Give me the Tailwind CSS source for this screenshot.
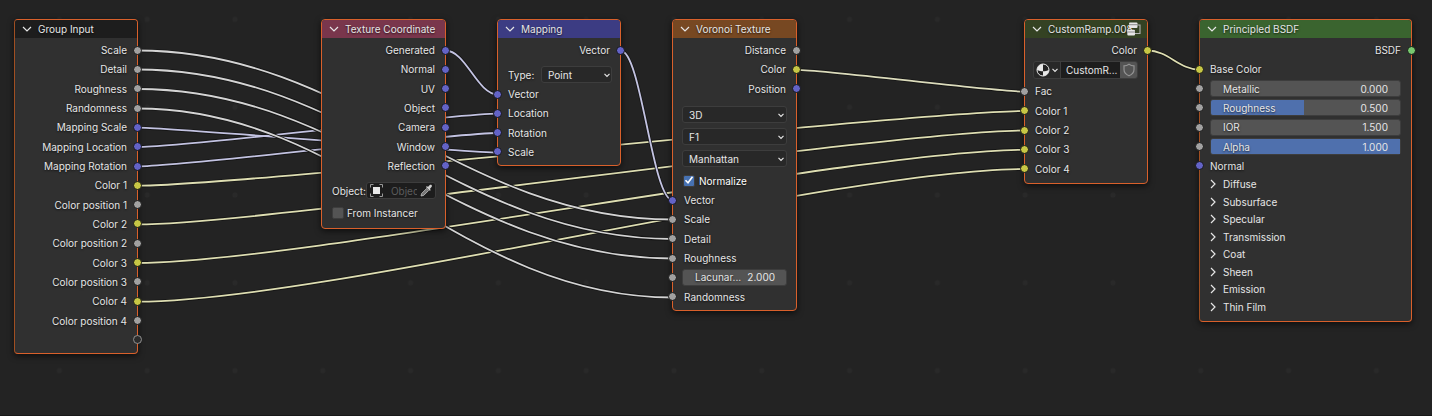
<!DOCTYPE html>
<html lang="en">
<head>
<meta charset="utf-8">
<title>Shader node editor</title>
<script src="https://cdn.jsdelivr.net/npm/@tailwindcss/browser@4"></script>
</head>
<body class="bg-[#232323]">
<svg width="0" height="0" class="absolute" aria-hidden="true">
  <symbol id="down" viewBox="0 0 10 10"><path d="M1 3l4 4 4-4" fill="none" stroke="currentColor" stroke-width="1.2"/></symbol>
  <symbol id="right" viewBox="0 0 10 10"><path d="M3 1l4 4-4 4" fill="none" stroke="currentColor" stroke-width="1.2"/></symbol>
  <symbol id="caret" viewBox="0 0 8 8"><path d="M1.500 2.800L4 5.300l2.500-2.500" fill="none" stroke="currentColor" stroke-width="1.2"/></symbol>
</svg>
<main class="relative min-h-screen w-full overflow-hidden border-b border-[#181818] font-['Inter',sans-serif] text-[10px] leading-3 text-[#e6e6e6] [text-shadow:0_1px_2px_#000000b0]
  [&_i]:absolute [&_i]:size-[9px] [&_i]:rounded-full [&_i]:border [&_i]:border-[#161616]
  [&_section]:absolute [&_section]:top-[19px] [&_section]:flex [&_section]:flex-col [&_section]:rounded-[4px] [&_section]:border [&_section]:border-[#d9602b] [&_section]:bg-[#303030] [&_section]:shadow-[0_2px_6px_#000000a0]
  [&_header]:flex [&_header]:h-[18px] [&_header]:items-center [&_header]:gap-[6px] [&_header]:rounded-t-[3px] [&_header]:pb-px [&_header]:pl-[7px] [&_header]:mb-[3px] [&_header]:whitespace-nowrap
  [&_header_svg]:size-[10px]
  [&_ul]:flex [&_ul]:flex-col [&_li]:relative [&_li]:flex [&_li]:flex-1 [&_li]:items-center [&_li]:px-[10px] [&_li]:pb-px">

  <svg class="absolute inset-0 size-full" fill="none" aria-hidden="true">
    <defs>
      <pattern id="dots" x="15.500" y="-24.500" width="87.800" height="87.800" patternUnits="userSpaceOnUse"><circle cx="43.900" cy="43.900" r="2.500" fill="#292929"/></pattern>
      <g id="white">
        <path d="M137.500 50.500C351.500 50.500 459 219.500 673 219.500"/>
        <path d="M137.500 69.500C351.500 69.500 459 239 673 239"/>
        <path d="M137.500 89C351.500 89 459 258.500 673 258.500"/>
        <path d="M137.500 108.500C351.500 108.500 459 297.500 673 297.500"/>
      </g>
      <g id="lilac">
        <path d="M137.500 127.700C172.500 127.700 463 152.700 498 152.700"/>
        <path d="M137.500 147C184 147 451.500 113.700 498 113.700"/>
        <path d="M137.500 166.400C184 166.400 451.500 133 498 133"/>
        <path d="M445.500 50.500C466 50.500 477 94.500 498 94.500"/>
        <path d="M620.500 50.500C641.500 50.500 652 200.500 673 200.500"/>
      </g>
      <g id="yellow">
        <path d="M137.500 185.700C242.500 185.700 919.500 111 1024.500 111"/>
        <path d="M137.500 224.400C268.500 224.400 893.500 130.500 1024.500 130.500"/>
        <path d="M137.500 263C296.500 263 865.500 149.800 1024.500 149.800"/>
        <path d="M137.500 301.700C322.500 301.700 839.500 169 1024.500 169"/>
        <path d="M1147.500 50.500C1168.500 50.500 1179 69.800 1200 69.800"/>
      </g>
    </defs>
    <rect width="100%" height="100%" fill="url(#dots)"/>
    <use href="#yellow" stroke="#151515" stroke-width="3.500"/><use href="#yellow" stroke="#dedeb2" stroke-width="1.800"/>
    <path d="M796.500 69.800C827 69.800 993.500 91.700 1024.500 91.700" stroke="#151515" stroke-width="3.500"/>
    <path d="M796.500 69.800C827 69.800 993.500 91.700 1024.500 91.700" stroke="#dcdcbc" stroke-width="1.800"/>
    <use href="#lilac" stroke="#151515" stroke-width="3.500"/><use href="#lilac" stroke="#c3c3e2" stroke-width="1.800"/>
    <use href="#white" stroke="#151515" stroke-width="3.500"/><use href="#white" stroke="#d4d4d4" stroke-width="1.800"/>
  </svg>

  <section class="left-[14px] w-[124px] border-l-[#a04f22]!" aria-label="Group Input">
    <header class="bg-[#1d1d1d]"><button aria-label="Collapse"><svg><use href="#down"/></svg></button>Group Input</header>
    <ul class="mb-[3px] h-[309px] text-right [&_i]:-right-[5px] [&_li]:justify-end">
      <li>Scale<i class="bg-[#a1a1a1]"></i></li>
      <li>Detail<i class="bg-[#a1a1a1]"></i></li>
      <li>Roughness<i class="bg-[#a1a1a1]"></i></li>
      <li>Randomness<i class="bg-[#a1a1a1]"></i></li>
      <li>Mapping Scale<i class="bg-[#6363c7]"></i></li>
      <li>Mapping Location<i class="bg-[#6363c7]"></i></li>
      <li>Mapping Rotation<i class="bg-[#6363c7]"></i></li>
      <li>Color 1<i class="bg-[#c7c745]"></i></li>
      <li>Color position 1<i class="bg-[#a1a1a1]"></i></li>
      <li>Color 2<i class="bg-[#c7c745]"></i></li>
      <li>Color position 2<i class="bg-[#a1a1a1]"></i></li>
      <li>Color 3<i class="bg-[#c7c745]"></i></li>
      <li>Color position 3<i class="bg-[#a1a1a1]"></i></li>
      <li>Color 4<i class="bg-[#c7c745]"></i></li>
      <li>Color position 4<i class="bg-[#a1a1a1]"></i></li>
      <li><i class="border-[#909090]! bg-[#2c2c2c]"></i></li>
    </ul>
  </section>

  <section class="left-[321px] w-[125px]" aria-label="Texture Coordinate">
    <header class="bg-[#79364c]"><button aria-label="Collapse"><svg><use href="#down"/></svg></button>Texture Coordinate</header>
    <ul class="h-[135px] [&_i]:-right-[5px] [&_i]:bg-[#6363c7] [&_li]:justify-end">
      <li>Generated<i></i></li>
      <li>Normal<i></i></li>
      <li>UV<i></i></li>
      <li>Object<i></i></li>
      <li>Camera<i></i></li>
      <li>Window<i></i></li>
      <li>Reflection<i></i></li>
    </ul>
    <div class="mt-[6px] flex items-center pr-[9px] pl-[10px]">
      <label for="obj">Object:</label>
      <div class="flex h-[17px] min-w-0 flex-1 items-center rounded-[3px] border border-[#3d3d3d] bg-[#1d1d1d] pr-[2px] pl-[3px]">
        <svg class="size-[13px] shrink-0" viewBox="0 0 13 13" fill="none"><rect x="3" y="3" width="7" height="7" fill="#e8e8e8"/><path d="M.5 3.500v-3h3M9.500.5h3v3M12.500 9.500v3h-3M3.500 12.500h-3v-3" stroke="#9a9a9a"/></svg>
        <input id="obj" placeholder="Object" class="ml-2 w-[26px] min-w-0 bg-transparent placeholder:text-[#5c5c5c]">
        <button aria-label="Pick object" class="ml-auto"><svg class="size-[13px]" viewBox="0 0 13 13"><path d="M1 12l.7-2.600 5-5 2 2-5 5z" fill="#777" stroke="#c0c0c0" stroke-width=".8"/><path d="M6 3l1-.9.9.8 1.600-1.700c1.600-1.300 3.200.4 2 1.900L9.900 4.900l.9 1-.9.9z" fill="#d0d0d0"/></svg></button>
      </div>
    </div>
    <label class="mt-[5px] mb-[7px] ml-[10px] flex h-[17px] items-center gap-[3px]"><input type="checkbox" class="size-[12px] appearance-none rounded-[2px] border border-[#3d3d3d] bg-[#545454]">From Instancer</label>
  </section>

  <section class="left-[497px] w-[124px]" aria-label="Mapping">
    <header class="bg-[#3c3c83]"><button aria-label="Collapse"><svg><use href="#down"/></svg></button>Mapping</header>
    <ul class="h-[19px]"><li class="justify-end">Vector<i class="-right-[5px] bg-[#6363c7]"></i></li></ul>
    <div class="mt-[6px] mb-[2px] flex items-center justify-between pr-[8px] pl-[10px]">
      <label for="type">Type:</label>
      <div class="relative w-[71px]">
        <select id="type" class="block h-[17px] w-full appearance-none rounded-[3px] border border-[#3d3d3d] bg-[#282828] pl-[6px] leading-3"><option>Point</option><option>Texture</option><option>Vector</option><option>Normal</option></select>
        <svg class="pointer-events-none absolute top-[5px] right-[1px] size-[8px]"><use href="#caret"/></svg>
      </div>
    </div>
    <ul class="mb-[3px] h-[77px] [&_i]:-left-[5px] [&_i]:bg-[#6363c7]">
      <li>Vector<i></i></li>
      <li>Location<i></i></li>
      <li>Rotation<i></i></li>
      <li>Scale<i></i></li>
    </ul>
  </section>

  <section class="left-[672px] w-[125px]" aria-label="Voronoi Texture">
    <header class="bg-[#774822]"><button aria-label="Collapse"><svg><use href="#down"/></svg></button>Voronoi Texture</header>
    <ul class="h-[58px] [&_i]:-right-[5px] [&_li]:justify-end">
      <li>Distance<i class="bg-[#a1a1a1]"></i></li>
      <li>Color<i class="bg-[#c7c745]"></i></li>
      <li>Position<i class="bg-[#6363c7]"></i></li>
    </ul>
    <div class="mt-[7px] flex flex-col gap-[5px] px-[9px] [&_div]:relative [&_select]:block [&_select]:h-[17px] [&_select]:w-full [&_select]:appearance-none [&_select]:rounded-[3px] [&_select]:border [&_select]:border-[#3d3d3d] [&_select]:bg-[#282828] [&_select]:pl-[6px] [&_svg]:pointer-events-none [&_svg]:absolute [&_svg]:top-[5px] [&_svg]:right-[2px] [&_svg]:size-[8px]">
      <div><select aria-label="Dimensions"><option>3D</option><option>2D</option></select><svg><use href="#caret"/></svg></div>
      <div><select aria-label="Feature"><option>F1</option><option>F2</option></select><svg><use href="#caret"/></svg></div>
      <div><select aria-label="Distance metric"><option>Manhattan</option><option>Euclidean</option></select><svg><use href="#caret"/></svg></div>
    </div>
    <label class="relative mt-[5px] mb-[2px] ml-[10px] flex h-[17px] items-center gap-[4px] text-white"><input type="checkbox" checked class="size-[12px] appearance-none rounded-[2px] border border-[#3d3d3d] bg-[#4772b3]"><svg class="pointer-events-none absolute top-[3px] left-[1px] size-[10px]" viewBox="0 0 10 10"><path d="M1.500 5.200l2.500 2.500 4.500-6" fill="none" stroke="#fff" stroke-width="1.600"/></svg>Normalize</label>
    <ul class="mb-[3px] h-[116px] [&_i]:-left-[5px] [&_i]:bg-[#a1a1a1] [&_li]:pl-[11px]">
      <li>Vector<i class="bg-[#6363c7]!"></i></li>
      <li>Scale<i></i></li>
      <li>Detail<i></i></li>
      <li>Roughness<i></i></li>
      <li class="px-[9px]!"><i></i><div class="flex h-[17px] flex-1 items-center rounded-[3px] border border-[#3d3d3d] bg-[#545454] pr-[11px] pl-[12px]"><label for="lac">Lacunar...</label><input id="lac" value="2.000" class="w-0 min-w-0 flex-1 text-right"></div></li>
      <li>Randomness<i></i></li>
    </ul>
  </section>

  <section class="left-[1024px] w-[124px]" aria-label="CustomRamp.008">
    <header class="relative bg-[#344223]"><button aria-label="Collapse"><svg><use href="#down"/></svg></button>CustomRamp.008
      <svg class="absolute top-[2px] right-[6px] size-[14px]!" viewBox="0 0 14 14"><path d="M10.500 3h2.500v8.500H8" fill="none" stroke="#b5b5b5" stroke-width="1.100"/><rect x="2" y=".5" width="8.500" height="5.500" rx="1" fill="#e6e6e6"/><rect x=".3" y="7.800" width="7.700" height="5.700" rx="1" fill="#e6e6e6"/><path d="M2 2.700h8.500M.3 10h7.700" stroke="#666" stroke-width=".7"/></svg>
    </header>
    <ul class="h-[19px]"><li class="justify-end">Color<i class="-right-[5px] bg-[#c7c745]"></i></li></ul>
    <div class="mt-[1px] mb-[3px] ml-[8px] mr-[9px] flex h-[18px] overflow-hidden rounded-[3px] border border-[#3d3d3d] bg-[#3d3d3d]">
      <button aria-label="Browse node groups" class="flex w-[26px] items-center gap-px bg-[#282828] pl-[2px]">
        <svg class="size-[14px]" viewBox="0 0 14 14"><circle cx="7" cy="7" r="6" fill="#222" stroke="#e8e8e8"/><path d="M7 7V1a6 6 0 0 0-6 6c2 .9 4 1.200 6 1.200zM7 8.200c2 0 4-.3 6-1.200a6 6 0 0 1-6 6z" fill="#e8e8e8"/></svg>
        <svg class="size-[8px]"><use href="#caret"/></svg>
      </button>
      <input aria-label="Node group name" value="CustomR..." class="ml-px w-0 min-w-0 flex-1 bg-[#1d1d1d] pl-[5px]">
      <button aria-label="Fake user" class="flex w-[17px] items-center justify-center bg-[#545454]"><svg class="size-[14px]" viewBox="0 0 14 14"><path d="M7 1.200c1.500 1.200 3.200 1.700 5 1.700v3.600c0 3-2 5-5 6.300-3-1.300-5-3.300-5-6.300V2.900c1.800 0 3.500-.5 5-1.700z" fill="none" stroke="#929292" stroke-width="1.200"/></svg></button>
    </div>
    <ul class="mb-[4px] h-[97px] [&_i]:-left-[5px] [&_i]:bg-[#c7c745]">
      <li>Fac<i class="bg-[#a1a1a1]!"></i></li>
      <li>Color 1<i></i></li>
      <li>Color 2<i></i></li>
      <li>Color 3<i></i></li>
      <li>Color 4<i></i></li>
    </ul>
  </section>

  <section class="left-[1199px] w-[213px] border-l-[#a04f22]!" aria-label="Principled BSDF">
    <header class="bg-[#3a642f]"><button aria-label="Collapse"><svg><use href="#down"/></svg></button>Principled BSDF</header>
    <ul class="h-[135px] [&_div]:relative [&_div]:flex [&_div]:h-[17px] [&_div]:flex-1 [&_div]:items-center [&_div]:rounded-[3px] [&_div]:border [&_div]:border-[#3d3d3d] [&_div]:bg-[#545454] [&_div]:px-[12px] [&_i]:-left-[5px] [&_i]:bg-[#a1a1a1] [&_input]:relative [&_input]:w-0 [&_input]:min-w-0 [&_input]:flex-1 [&_input]:text-right [&_label]:relative [&_span]:absolute [&_span]:inset-y-0 [&_span]:left-0 [&_span]:rounded-l-[2px] [&_span]:bg-[#4f70ad]">
      <li class="justify-end">BSDF<i class="-right-[5px] left-auto! bg-[#77c86f]!"></i></li>
      <li>Base Color<i class="bg-[#c7c745]!"></i></li>
      <li><i></i><div><label for="met">Metallic</label><input id="met" value="0.000"></div></li>
      <li><i></i><div><span style="width:49%"></span><label for="rou">Roughness</label><input id="rou" value="0.500"></div></li>
      <li><i></i><div><label for="ior">IOR</label><input id="ior" value="1.500"></div></li>
      <li><i></i><div><span style="width:100%"></span><label for="alp">Alpha</label><input id="alp" value="1.000"></div></li>
      <li>Normal<i class="bg-[#6363c7]!"></i></li>
    </ul>
    <ul class="mb-[5px] h-[140px] [&_button]:flex [&_button]:items-center [&_button]:gap-[5px] [&_li]:pb-[2px] [&_li]:pl-[8px] [&_svg]:size-[10px]">
      <li><button><svg><use href="#right"/></svg>Diffuse</button></li>
      <li><button><svg><use href="#right"/></svg>Subsurface</button></li>
      <li><button><svg><use href="#right"/></svg>Specular</button></li>
      <li><button><svg><use href="#right"/></svg>Transmission</button></li>
      <li><button><svg><use href="#right"/></svg>Coat</button></li>
      <li><button><svg><use href="#right"/></svg>Sheen</button></li>
      <li><button><svg><use href="#right"/></svg>Emission</button></li>
      <li><button><svg><use href="#right"/></svg>Thin Film</button></li>
    </ul>
  </section>
</main>
</body>
</html>
